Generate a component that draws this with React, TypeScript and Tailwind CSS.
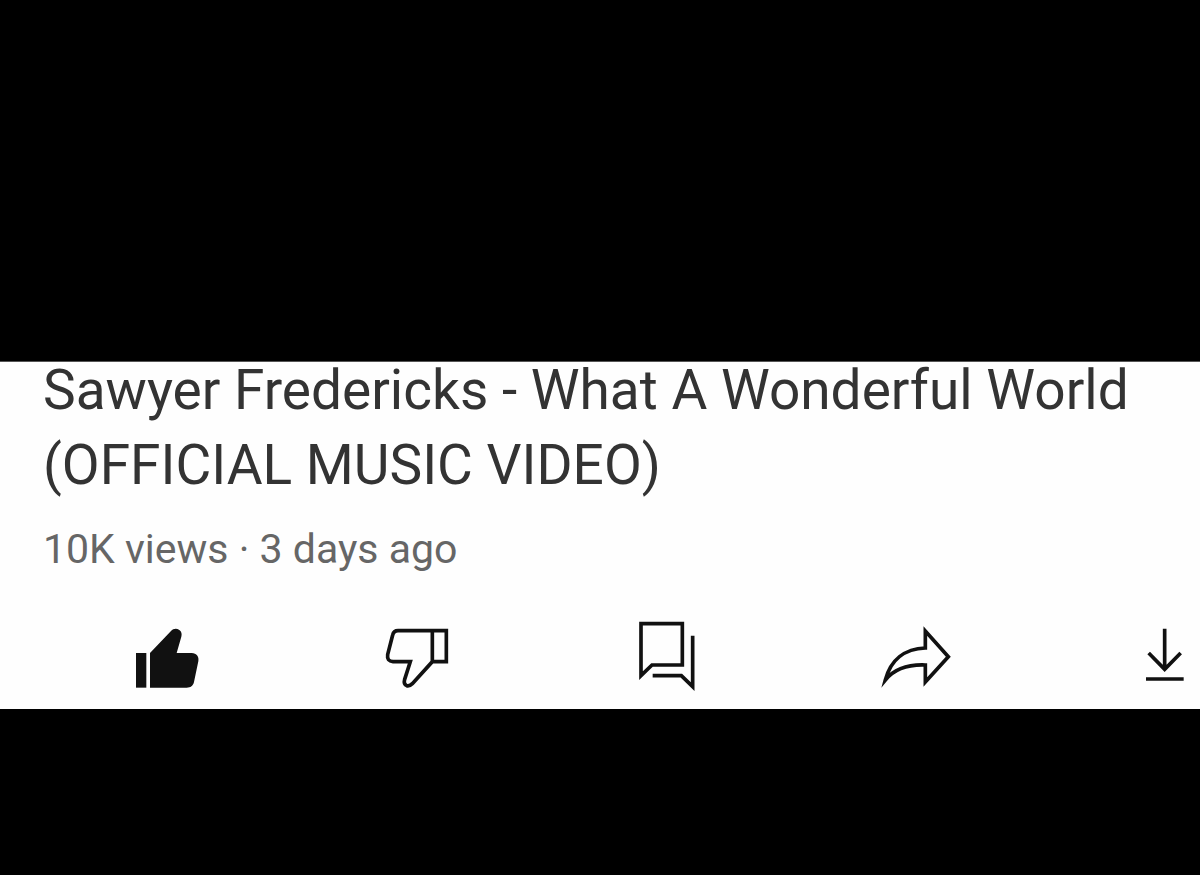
import type { ReactNode } from "react";

type Action = { label: string; pressed?: boolean; drawing: ReactNode };

const actions: Action[] = [
  {
    label: "Like",
    pressed: true,
    drawing: (
      <g fill="#111">
        <path d="M48 129H79V233H48Z" />
        <path d="M90 233V129L153 63C160 55 170 54 178 60C185 65 186 72 184 80L170 129H215C230 129 238 140 235 154L222 216C219 228 212 233 200 233Z" />
      </g>
    ),
  },
  {
    label: "Dislike",
    drawing: (
      <path d="M229 62H84Q71 62 68 75L53 134Q50 154 69 155H121L104 208C101 219 103 224 110 227C117 229 122 226 127 221L187 155H229ZM187 62V155" />
    ),
  },
  {
    label: "Comments",
    drawing: <path d="M63 41H187V165H96L63 197ZM218 77V230L184 197H98" />,
  },
  {
    label: "Share",
    drawing: (
      <path d="M166 63V114C104 116 62 150 46 210C72 178 112 163 166 165V216L235 140Z" />
    ),
  },
  {
    label: "Download",
    drawing: <path d="M134 56V178M86 129L134 178L182 129M78 207H191" />,
  },
];

function ActionButton({ label, pressed, drawing }: Action) {
  return (
    <button
      type="button"
      aria-label={label}
      aria-pressed={pressed}
      className="flex cursor-pointer justify-center"
    >
      <svg
        viewBox="0 0 300 300"
        fill="none"
        stroke="#111"
        strokeWidth="11"
        strokeMiterlimit="10"
        className="size-[100px] shrink-0"
        aria-hidden="true"
      >
        <g stroke={pressed ? "none" : undefined}>{drawing}</g>
      </svg>
    </button>
  );
}

export default function App() {
  return (
    <div className="flex min-h-screen flex-col bg-black font-['Roboto',sans-serif]">
      <div className="grow-[361]" />
      <main className="flex flex-col overflow-x-clip border-t border-[#555] bg-[#fefefe]">
        <header className="-mt-[9px] px-[43px]">
          <h1 className="text-[55px] leading-[75px] text-[#333]">
            Sawyer Fredericks - What A Wonderful World (OFFICIAL MUSIC VIDEO)
          </h1>
          <p className="mt-[22px] text-[41px] leading-[48px] text-[#666]">
            10K views · 3 days ago
          </p>
        </header>
        <div className="-mr-[95px] ml-[45px] mt-[37px] grid h-[99px] grid-cols-5">
          {actions.map((action) => (
            <ActionButton key={action.label} {...action} />
          ))}
        </div>
      </main>
      <div className="grow-[166]" />
    </div>
  );
}
